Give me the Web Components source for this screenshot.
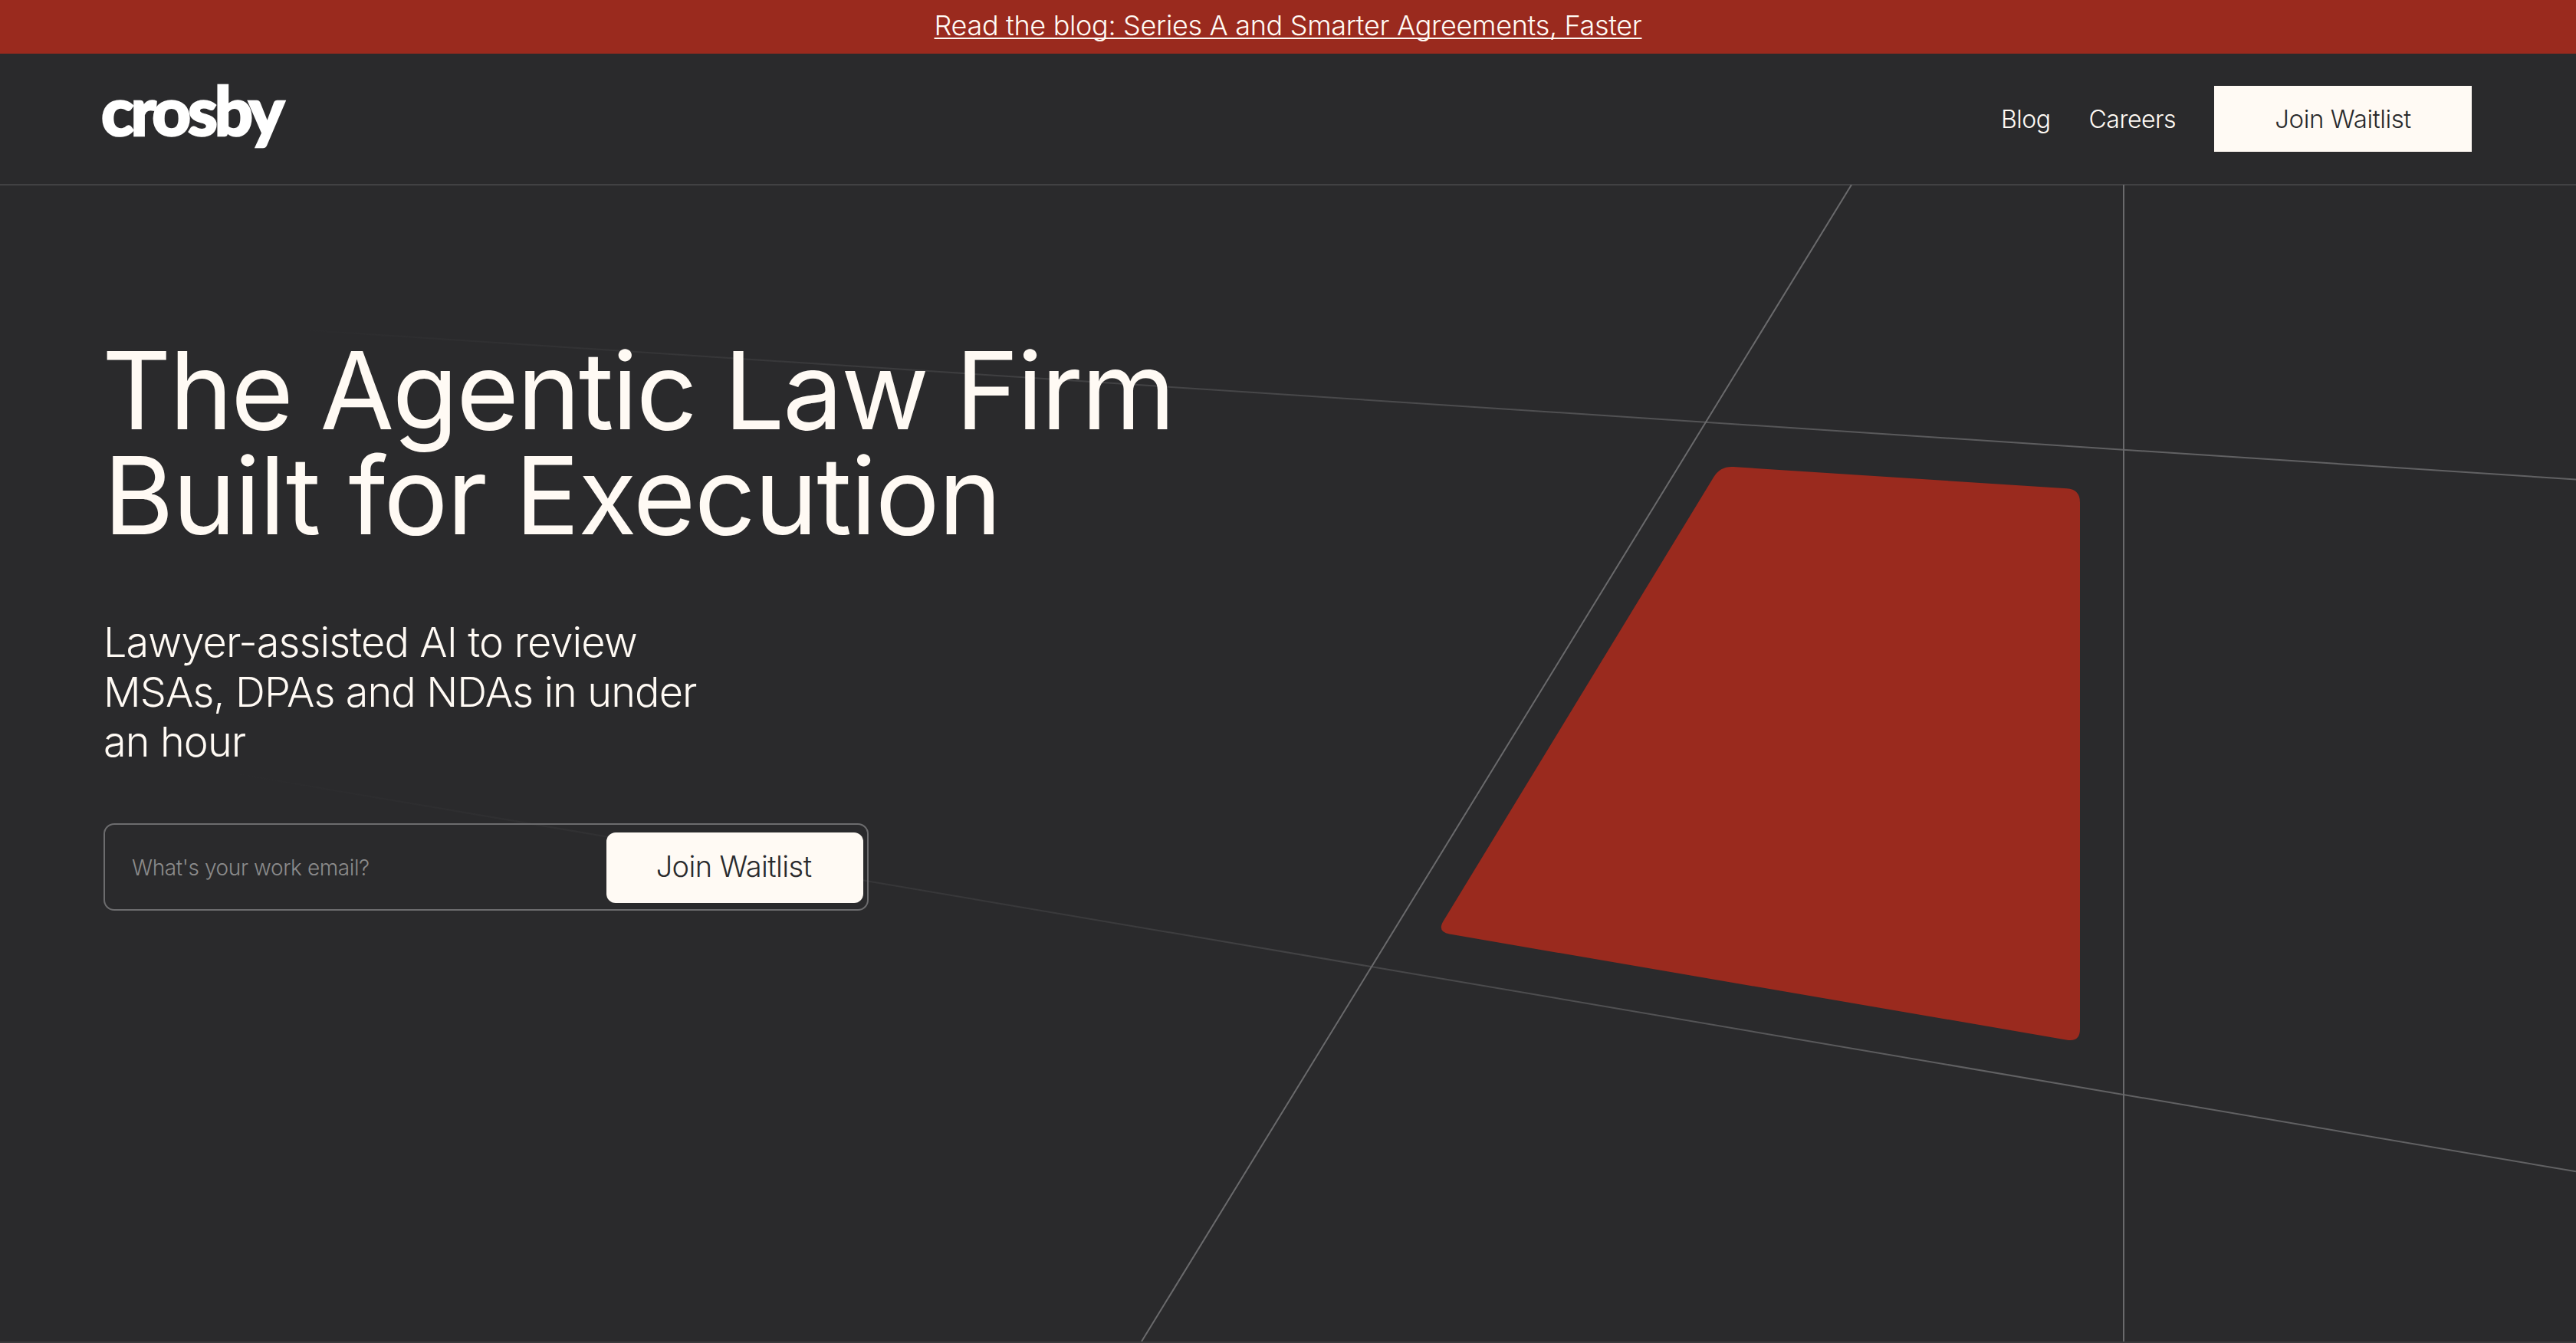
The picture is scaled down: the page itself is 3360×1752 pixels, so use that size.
<!DOCTYPE html>
<html lang="en">
<head>
<meta charset="utf-8">
<title>Crosby</title>
<style>
  html, body { margin: 0; height: 100%; background: #2a2a2c; }
  body { font-family: Inter, "Liberation Sans", sans-serif; color: #fffaf4; }
  #page { display: flex; flex-direction: column; height: 1752px; overflow: hidden; }
</style>
</head>
<body>
<div id="page">
  <top-banner>Read the blog: Series A and Smarter Agreements, Faster</top-banner>
  <site-nav></site-nav>
  <hero-section>
    <span slot="title" class="first">The Agentic Law Firm</span>
    <span slot="title" class="second">Built for Execution</span>
    <span slot="sub">Lawyer-assisted AI to review<br>MSAs, DPAs and NDAs in under<br>an hour</span>
  </hero-section>
</div>

<script>
class TopBanner extends HTMLElement {
  constructor() {
    super();
    this.attachShadow({ mode: 'open' });
    this.shadowRoot.innerHTML = `
      <style>
        :host { display: flex; flex: none; box-sizing: border-box; height: 70px; padding-bottom: 4px; background: #9a2a1e; justify-content: center; align-items: center; }
        a { color: #fffaf4; font-size: 36px; font-weight: 300; letter-spacing: -0.33px; text-decoration: underline; text-decoration-thickness: 2px; text-underline-offset: 3px; text-decoration-skip-ink: none; }
      </style>
      <a href="#"><slot></slot></a>
    `;
  }
}

class SiteNav extends HTMLElement {
  constructor() {
    super();
    this.attachShadow({ mode: 'open' });
    this.shadowRoot.innerHTML = `
      <style>
        :host { display: flex; flex: none; box-sizing: border-box; height: 172px; padding: 0 136px 0 134px; align-items: center; justify-content: space-between; border-bottom: 2px solid #414143; margin-bottom: -1px; }
        .logo { font-family: Lato, Inter, sans-serif; font-size: 88px; font-weight: 900; letter-spacing: -4.2px; color: #fff; -webkit-text-stroke: 2.5px #fff; line-height: 1; margin: -24px 0 0 -2px; }
        .links { display: flex; align-items: center; gap: 50px; }
        a { color: #fffaf4; font-size: 32px; font-weight: 300; letter-spacing: -0.5px; text-decoration: none; }
        .cta { box-sizing: border-box; width: 336px; height: 86px; display: flex; align-items: center; justify-content: center; background: #fffaf4; color: #2a2a2c; font-size: 33px; letter-spacing: -0.4px; }
      </style>
      <div class="logo">crosby</div>
      <div class="links">
        <a href="#">Blog</a>
        <a href="#">Careers</a>
        <a class="cta" href="#">Join Waitlist</a>
      </div>
    `;
  }
}

class WaitlistForm extends HTMLElement {
  constructor() {
    super();
    this.attachShadow({ mode: 'open' });
    this.shadowRoot.innerHTML = `
      <style>
        :host { display: flex; box-sizing: border-box; width: 998px; height: 114px; border: 2px solid #6c6c6e; border-radius: 14px; padding: 10px 5px 8px 35px; align-items: stretch; }
        .ph { flex: 1; display: flex; align-items: center; font-size: 28px; font-weight: 300; letter-spacing: -0.4px; color: #8b8b8b; }
        button { width: 335px; border: 0; border-radius: 12px; background: #fffaf4; color: #2a2a2c; font: 300 38px Inter, "Liberation Sans", sans-serif; letter-spacing: -0.6px; padding: 0 3px 5px 0; }
      </style>
      <div class="ph">What's your work email?</div>
      <button type="button">Join Waitlist</button>
    `;
  }
}

class HeroBackdrop extends HTMLElement {
  constructor() {
    super();
    this.attachShadow({ mode: 'open' });
    // sharp corners of the red plane, rounded below
    const pts = [[2244, 608.5], [2713, 639], [2713, 1361], [1874, 1217]];
    const r = 17;
    let d = '';
    pts.forEach((p, i) => {
      const a = pts[(i + 3) % 4], b = pts[(i + 1) % 4];
      const toward = (q) => {
        const l = Math.hypot(q[0] - p[0], q[1] - p[1]);
        return [p[0] + (q[0] - p[0]) * r / l, p[1] + (q[1] - p[1]) * r / l];
      };
      const s = toward(a), e = toward(b);
      d += (i ? 'L' : 'M') + s.join(' ') + 'Q' + p.join(' ') + ' ' + e.join(' ');
    });
    d += 'Z';
    this.shadowRoot.innerHTML = `
      <style>
        :host { display: block; position: absolute; inset: 0; }
        svg { display: block; width: 100%; height: 100%; }
      </style>
      <svg viewBox="0 241 3360 1511" preserveAspectRatio="none">
        <defs>
          <linearGradient id="fadeTop" gradientUnits="userSpaceOnUse" x1="385" y1="430" x2="2800" y2="590">
            <stop offset="0" stop-color="#616163" stop-opacity="0"/>
            <stop offset="1" stop-color="#616163"/>
          </linearGradient>
          <linearGradient id="fadeLow" gradientUnits="userSpaceOnUse" x1="300" y1="1009" x2="2600" y2="1400">
            <stop offset="0" stop-color="#616163" stop-opacity="0"/>
            <stop offset="0.5" stop-color="#616163" stop-opacity="0.3"/>
            <stop offset="1" stop-color="#616163"/>
          </linearGradient>
        </defs>
        <line x1="385" y1="430" x2="3360" y2="626" stroke="url(#fadeTop)" stroke-width="2"/>
        <line x1="300" y1="1009" x2="3360" y2="1530" stroke="url(#fadeLow)" stroke-width="2"/>
        <line x1="2415" y1="241" x2="1489" y2="1752" stroke="#6a6a6c" stroke-width="2"/>
        <line x1="2770" y1="241" x2="2770" y2="1752" stroke="#6a6a6c" stroke-width="2"/>
        <path d="${d}" fill="#9a2a1e"/>
      </svg>
    `;
  }
}

class HeroSection extends HTMLElement {
  constructor() {
    super();
    this.attachShadow({ mode: 'open' });
    this.shadowRoot.innerHTML = `
      <style>
        :host { display: block; position: relative; flex: 1; border-bottom: 2px solid #3a3a3c; }
        .copy { position: relative; display: flex; flex-direction: column; align-items: flex-start; padding: 200px 0 0 135px; }
        h1 { margin: 0; font-size: 140px; font-weight: 400; line-height: 136.5px; color: #fffaf4; }
        ::slotted(.first) { display: block; letter-spacing: -2.4px; margin-left: -2px; }
        ::slotted(.second) { display: block; letter-spacing: -1.65px; }
        p { margin: 91px 0 0; font-size: 54px; font-weight: 300; line-height: 65px; letter-spacing: -0.9px; color: #fffaf4; }
        waitlist-form { margin-top: 74px; }
      </style>
      <hero-backdrop></hero-backdrop>
      <div class="copy">
        <h1><slot name="title"></slot></h1>
        <p><slot name="sub"></slot></p>
        <waitlist-form></waitlist-form>
      </div>
    `;
  }
}

customElements.define('top-banner', TopBanner);
customElements.define('site-nav', SiteNav);
customElements.define('waitlist-form', WaitlistForm);
customElements.define('hero-backdrop', HeroBackdrop);
customElements.define('hero-section', HeroSection);
</script>
</body>
</html>
